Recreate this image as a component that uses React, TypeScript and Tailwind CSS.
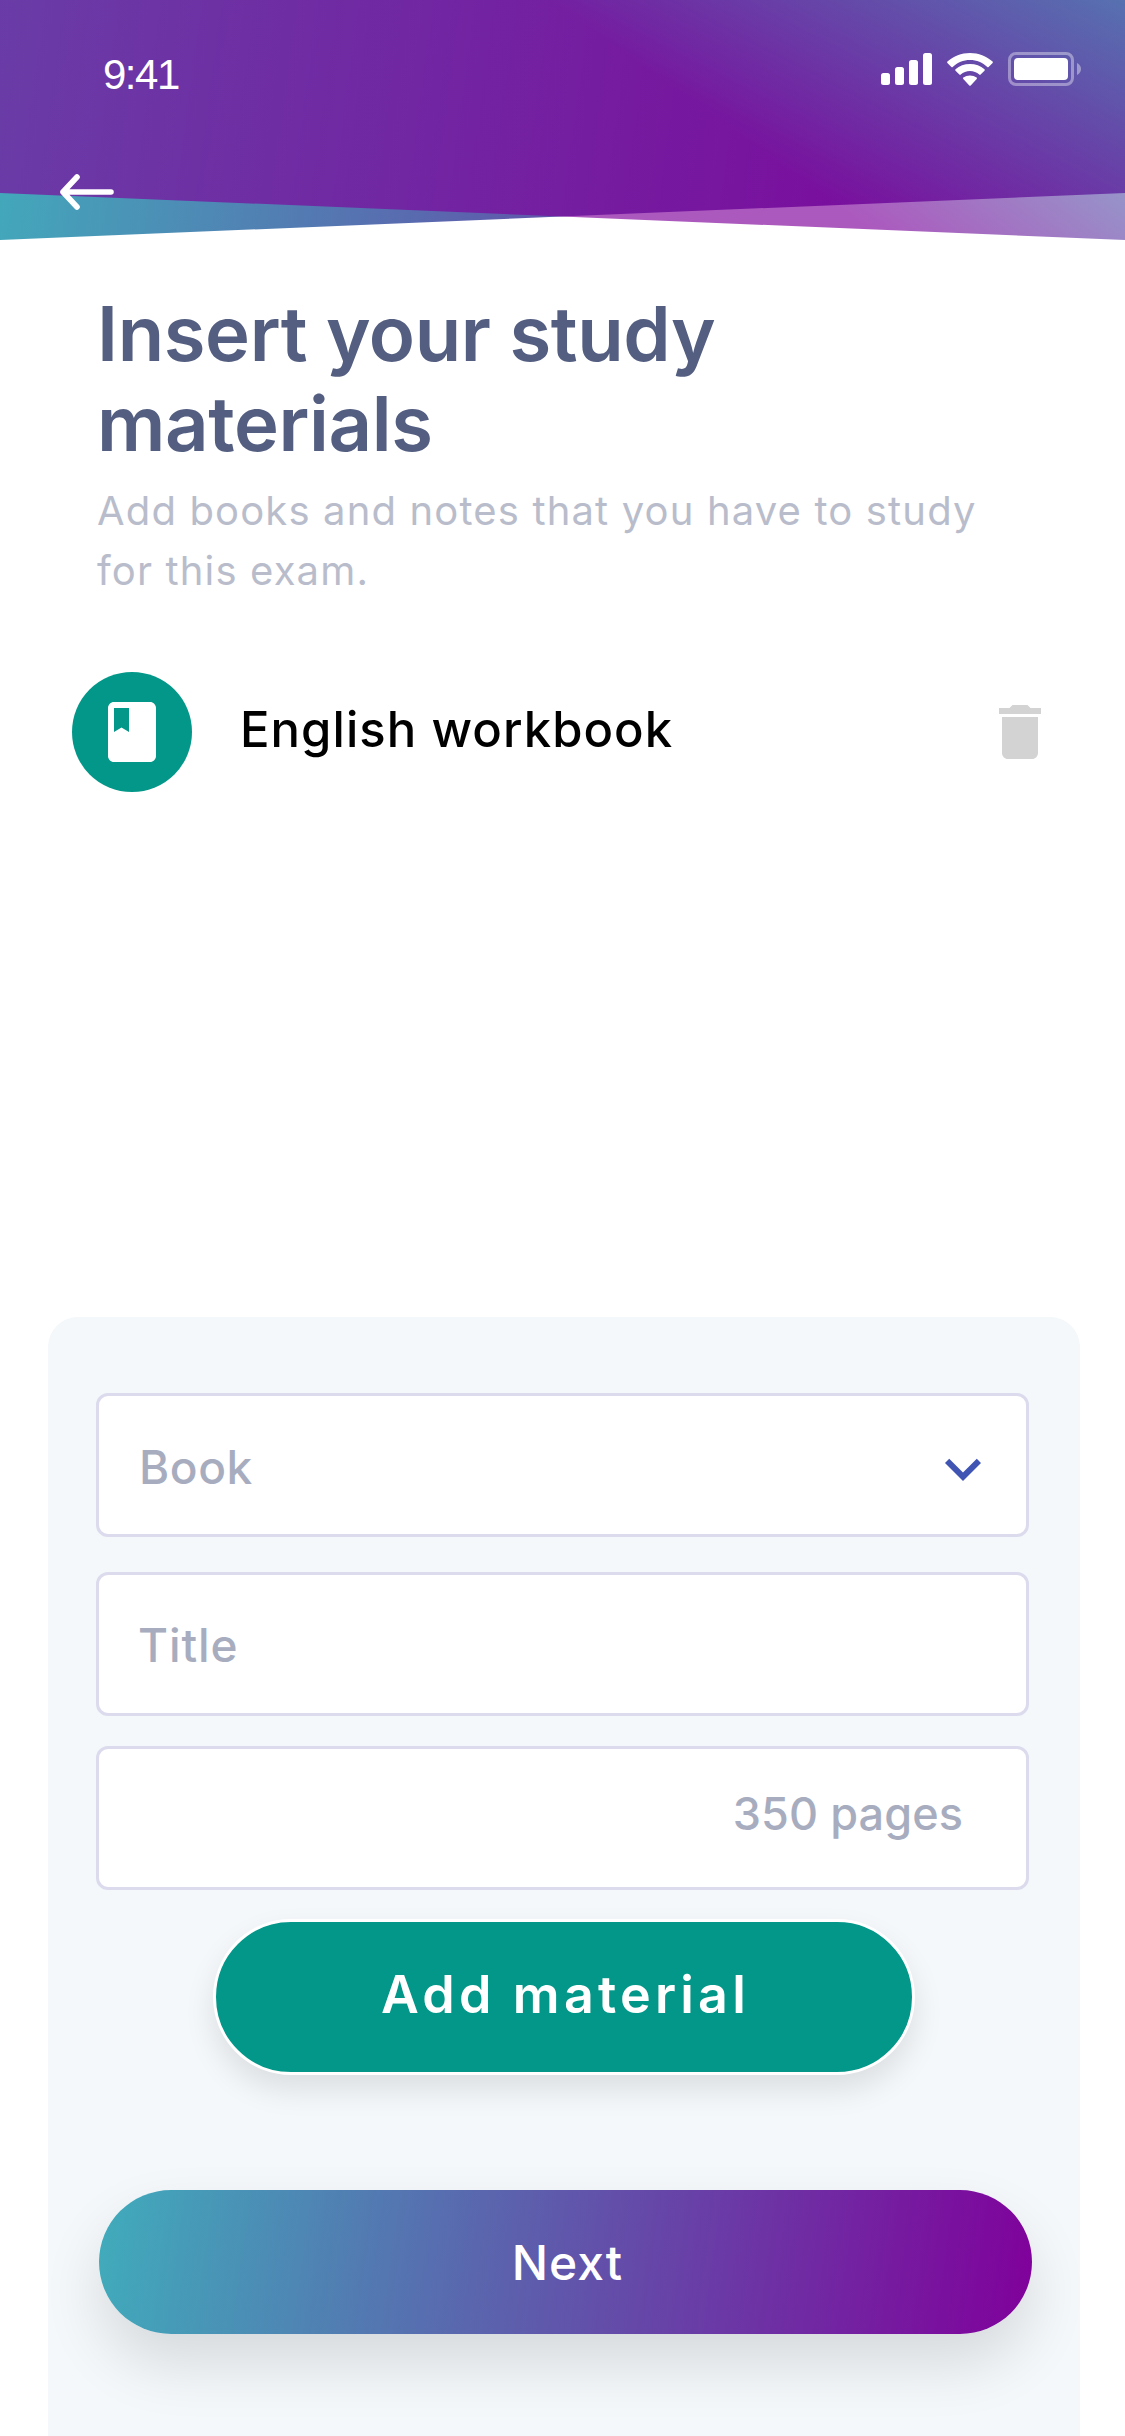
import type { ReactNode } from "react";

interface FieldProps {
  children: ReactNode;
  className?: string;
}

function SignalIcon() {
  return (
    <svg className="w-[51px] h-8" viewBox="0 0 51 32" fill="currentColor">
      <rect x="0" y="20" width="9" height="12" rx="2.5" />
      <rect x="14" y="14" width="9" height="18" rx="2.5" />
      <rect x="28" y="7" width="9" height="25" rx="2.5" />
      <rect x="42" y="0" width="9" height="32" rx="2.5" />
    </svg>
  );
}

function WifiIcon() {
  return (
    <svg className="w-[46px] h-[33px]" viewBox="0 0 46 33" fill="currentColor">
      <path d="M23 7c6.600 0 12.700 2.500 17.300 7 .4.400.9.400 1.300 0l4-4c.4-.4.400-1 0-1.400C39.500 3.200 31.500 0 23 0S6.500 3.200.400 8.600c-.4.400-.4 1 0 1.400l4 4c.4.400.9.400 1.300 0C10.300 9.500 16.400 7 23 7z" />
      <path d="M23 18c3.500 0 6.700 1.300 9.300 3.600.4.400.9.400 1.300 0l3.900-3.900c.4-.4.400-1 0-1.400C33.600 12.900 28.500 11 23 11s-10.600 1.900-14.500 5.300c-.4.400-.4 1 0 1.400l3.900 3.900c.4.400.9.400 1.300 0C16.300 19.300 19.500 18 23 18z" />
      <path d="M29.700 25.900c.4-.4.400-1-.1-1.300C27.700 23.300 25.400 22.500 23 22.500s-4.700.8-6.600 2.100c-.5.300-.5.900-.1 1.300l6 6.600c.4.400 1 .4 1.400 0z" />
    </svg>
  );
}

function BatteryIcon() {
  return (
    <svg className="w-[73px] h-[34px]" viewBox="0 0 73 34">
      <rect x="1.500" y="1.500" width="63" height="31" rx="6.500" fill="none" stroke="#fff" strokeOpacity="0.38" strokeWidth="3" />
      <path d="M69 11v12c2.400-1 4-3.400 4-6s-1.600-5-4-6z" fill="#fff" fillOpacity="0.4" />
      <rect x="6" y="6" width="54" height="22" rx="4" fill="#fff" />
    </svg>
  );
}

// Two crossing slabs, the upper one translucent
function HeaderBackdrop() {
  return (
    <svg className="absolute inset-0 w-full h-full" viewBox="0 0 1125 240">
      <defs>
        <linearGradient id="slab" gradientUnits="userSpaceOnUse" x1="0" y1="60" x2="1140" y2="215">
          <stop offset="0" stopColor="#42aabb" />
          <stop offset="1" stopColor="#7f009b" />
        </linearGradient>
        <linearGradient id="veil" gradientUnits="userSpaceOnUse" x1="585" y1="25" x2="780" y2="-247">
          <stop offset="0" stopColor="#7f009b" />
          <stop offset="1" stopColor="#42aabb" />
        </linearGradient>
      </defs>
      <path d="M0 0H1125V193L0 240Z" fill="url(#slab)" />
      <path d="M0 0H1125V240L0 193Z" fill="url(#veil)" fillOpacity="0.65" />
    </svg>
  );
}

function Field({ children, className = "" }: FieldProps) {
  return (
    <div
      className={`flex items-center h-36 rounded-xl border-3 border-[#dbdbed] bg-white font-medium text-[#a7adbf] ${className}`}
    >
      {children}
    </div>
  );
}

export default function App() {
  return (
    <div className="flex flex-col w-[1125px] h-[2436px] overflow-hidden bg-white font-['Inter',sans-serif]">
      <header className="relative h-60 shrink-0 text-white">
        <HeaderBackdrop />
        <div className="relative flex items-start justify-between pt-[52px] pl-[103px] pr-11">
          <span className="pt-px font-['Liberation_Sans',sans-serif] text-[42px] leading-[44px] tracking-[-1.5px]">9:41</span>
          <div className="flex items-center gap-[15px]">
            <SignalIcon />
            <WifiIcon />
            <BatteryIcon />
          </div>
        </div>
        <button className="relative block mt-[77px] ml-[60px]" aria-label="Back">
          <svg className="w-[54px] h-9" viewBox="0 0 54 36" fill="none" stroke="currentColor" strokeWidth="5.600" strokeLinecap="round" strokeLinejoin="round">
            <path d="M17 3L3 18l14 15M3 18h48" />
          </svg>
        </button>
      </header>

      <main className="flex flex-col flex-1">
        <div className="pt-12 pl-[97px]">
          <h1 className="text-[76px] leading-[90px] font-semibold tracking-[-0.4px] text-[#535e80]">
            Insert your study
            <br />
            materials
          </h1>
          <p className="mt-[13px] text-[40px] leading-[60px] tracking-[1.150px] whitespace-nowrap text-[#b9bdcb]">
            Add books and notes that you have to study
            <br />
            for this exam.
          </p>
        </div>

        <div className="flex items-center mt-[71px] pl-[72px] pr-[69px]">
          <div className="flex items-center justify-center w-[120px] h-[120px] rounded-full bg-[#029788]">
            <svg className="w-[72px] h-[72px]" viewBox="0 0 24 24" fill="#fff">
              <path d="M18 2H6c-1.100 0-2 .9-2 2v16c0 1.100.9 2 2 2h12c1.100 0 2-.9 2-2V4c0-1.100-.9-2-2-2zM6 4h5v8l-2.500-1.500L6 12V4z" />
            </svg>
          </div>
          <span className="ml-12 pb-[5px] text-[49px] font-medium tracking-[1.050px] text-black">English workbook</span>
          <button className="ml-auto" aria-label="Delete">
            <svg className="w-[72px] h-[72px]" viewBox="0 0 24 24" fill="#d3d3d3">
              <path d="M6 19c0 1.100.9 2 2 2h8c1.100 0 2-.9 2-2V7H6v12zM19 4h-3.500l-1-1h-5l-1 1H5v2h14V4z" />
            </svg>
          </button>
        </div>

        <section className="flex flex-col flex-1 mt-[525px] ml-12 mr-[45px] pt-[76px] pl-12 pr-[51px] rounded-t-[30px] bg-[#f4f8fb]">
          <Field className="justify-between pl-10 pr-[27px] text-[46px] tracking-[0.6px]">
            <span className="pt-1">Book</span>
            <svg className="w-[72px] h-[72px] mt-2" viewBox="0 0 24 24" fill="#4055b3">
              <path d="M16.590 8.590L12 13.170 7.410 8.590 6 10l6 6 6-6z" />
            </svg>
          </Field>
          <Field className="mt-[35px] pl-[39px] pt-[3px] text-[46px] tracking-[0.9px]">Title</Field>
          <Field className="mt-[30px] justify-end pr-[63px] pb-2 text-[45px] tracking-[0.1px]">350 pages</Field>
          <button className="self-center mt-[29px] ml-[3px] w-[702px] h-[156px] rounded-full border-3 border-white bg-[#029788] pl-[3px] pb-[5px] text-[52px] font-semibold tracking-[4.200px] text-white shadow-[0_15px_30px_rgba(0,0,0,0.1)]">
            Add material
          </button>
          <button className="mt-[115px] ml-[3px] -mr-[3px] h-36 shrink-0 rounded-full bg-[linear-gradient(98deg,#40acbb,#80009b)] pt-[2px] pl-1 text-[48px] font-medium tracking-[1px] text-white shadow-[0_30px_60px_rgba(0,0,0,0.12)]">
            Next
          </button>
        </section>
      </main>
    </div>
  );
}
